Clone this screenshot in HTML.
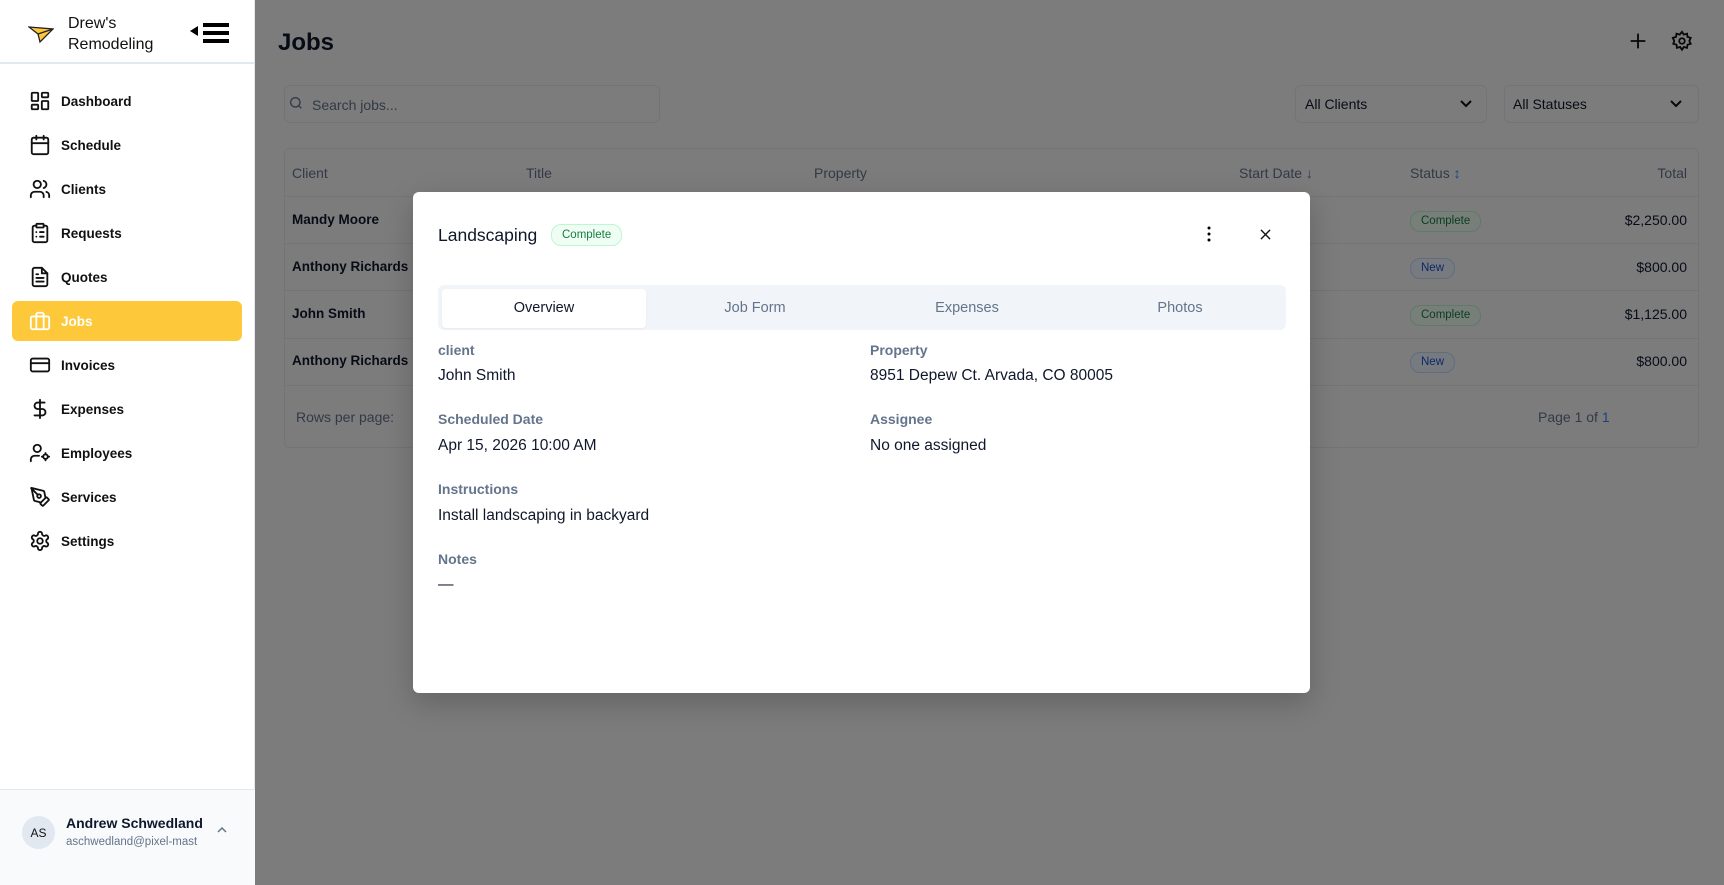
<!DOCTYPE html>
<html><head><meta charset="utf-8"><style>
*{box-sizing:border-box;margin:0;padding:0}
body{width:1724px;height:885px;overflow:hidden;font-family:"Liberation Sans",sans-serif;background:#f8f9fb;position:relative;color:#0f172a}
.sb{position:absolute;left:0;top:0;width:255px;height:885px;background:#fff;border-right:1px solid #e5e7eb}
.sbh{height:64px;border-bottom:2px solid #e2e8f0;position:relative}
.brand{position:absolute;left:68px;top:13px;font-size:16px;line-height:21px;color:#111}
.nav{position:absolute;left:0;top:79px;width:255px}
.ni{height:44px;display:flex;align-items:center;padding-left:29px;font-size:13.5px;font-weight:600;color:#111;position:relative}
.ni svg{width:22px;height:22px;margin-right:10px;fill:none;stroke:#111;stroke-width:2;stroke-linecap:round;stroke-linejoin:round}
.ni.act{background:#fdc93a;color:#fff;margin:0 13px 0 12px;padding-left:17px;border-radius:6px;height:40px;margin-top:2px;margin-bottom:2px}
.ni.act svg{stroke:#fff}
.user{position:absolute;left:0;top:789px;width:255px;height:96px;background:#f8fafc;border-top:1px solid #e2e8f0}
.av{position:absolute;left:22px;top:26px;width:33px;height:33px;border-radius:50%;background:#e2e8f0;font-size:12px;display:flex;align-items:center;justify-content:center;color:#111}
.main{position:absolute;left:255px;top:0;right:0;bottom:0}
.ov{position:absolute;left:255px;top:0;right:0;bottom:0;background:rgba(0,0,0,.5)}
.t{position:absolute;white-space:nowrap}
.modal{position:absolute;left:413px;top:192px;width:897px;height:501px;background:#fff;border-radius:6px;box-shadow:0 10px 30px rgba(0,0,0,.2)}
.lbl{position:absolute;font-size:14px;font-weight:600;color:#64748b}
.val{position:absolute;font-size:15.5px;color:#0f172a}
.badge{position:absolute;font-size:11.5px;border-radius:10px;padding:0 10px;height:21px;line-height:19px;border:1px solid}
.bc{color:#15803d;background:#f0fdf4;border-color:#bbf7d0}
.bn{color:#1d4ed8;background:#eff6ff;border-color:#bfdbfe}
</style></head><body>
<div class="sb">
 <div class="sbh">
  <svg style="position:absolute;left:28px;top:24px" width="26" height="20" viewBox="0 0 26 20"><path d="M1 3 L25 5 L12 18 L10 10 Z" fill="#fdc93a" stroke="#222" stroke-width="1.3"/><path d="M10 10 L25 5" stroke="#222" stroke-width="1.3"/></svg>
  <div class="brand">Drew's<br>Remodeling</div>
  <svg style="position:absolute;left:190px;top:22px" width="42" height="22" viewBox="0 0 42 22"><path d="M0 9 L8 4 L8 14 Z" fill="#000"/><rect x="13" y="1" width="26" height="4" fill="#000"/><rect x="13" y="9" width="26" height="4" fill="#000"/><rect x="13" y="17" width="26" height="4" fill="#000"/></svg>
 </div>
 <div class="nav">
  <div class="ni"><svg viewBox="0 0 24 24"><rect x="3" y="3" width="7" height="9" rx="1"/><rect x="14" y="3" width="7" height="5" rx="1"/><rect x="14" y="12" width="7" height="9" rx="1"/><rect x="3" y="16" width="7" height="5" rx="1"/></svg>Dashboard</div>
  <div class="ni"><svg viewBox="0 0 24 24"><rect x="3" y="4" width="18" height="18" rx="2"/><path d="M16 2v4M8 2v4M3 10h18"/></svg>Schedule</div>
  <div class="ni"><svg viewBox="0 0 24 24"><path d="M16 21v-2a4 4 0 0 0-4-4H6a4 4 0 0 0-4 4v2"/><circle cx="9" cy="7" r="4"/><path d="M22 21v-2a4 4 0 0 0-3-3.87M16 3.130a4 4 0 0 1 0 7.75"/></svg>Clients</div>
  <div class="ni"><svg viewBox="0 0 24 24"><rect x="8" y="2" width="8" height="4" rx="1"/><path d="M16 4h2a2 2 0 0 1 2 2v14a2 2 0 0 1-2 2H6a2 2 0 0 1-2-2V6a2 2 0 0 1 2-2h2M12 11h4M12 16h4M8 11h.01M8 16h.01"/></svg>Requests</div>
  <div class="ni"><svg viewBox="0 0 24 24"><path d="M14 2H6a2 2 0 0 0-2 2v16a2 2 0 0 0 2 2h12a2 2 0 0 0 2-2V8z"/><path d="M14 2v6h6M16 13H8M16 17H8M10 9H8"/></svg>Quotes</div>
  <div class="ni act"><svg viewBox="0 0 24 24"><rect x="2" y="7" width="20" height="14" rx="2"/><path d="M16 21V5a2 2 0 0 0-2-2h-4a2 2 0 0 0-2 2v16"/></svg>Jobs</div>
  <div class="ni"><svg viewBox="0 0 24 24"><rect x="2" y="5" width="20" height="14" rx="2"/><path d="M2 10h20"/></svg>Invoices</div>
  <div class="ni"><svg viewBox="0 0 24 24"><path d="M12 2v20M17 5H9.5a3.5 3.5 0 0 0 0 7h5a3.5 3.5 0 0 1 0 7H6"/></svg>Expenses</div>
  <div class="ni"><svg viewBox="0 0 24 24"><circle cx="9" cy="7" r="4"/><path d="M2 21v-2a4 4 0 0 1 4-4h5"/><circle cx="18" cy="16" r="2.5"/><path d="M18 12v1.5M18 18.5V20M14 16h1.5M20.5 16H22"/></svg>Employees</div>
  <div class="ni"><svg viewBox="0 0 24 24"><path d="M15.7 21.3a1 1 0 0 1-1.4 0l-1.6-1.6a1 1 0 0 1 0-1.4l5.6-5.6a1 1 0 0 1 1.4 0l1.6 1.6a1 1 0 0 1 0 1.4z"/><path d="m18 13-1.4-6.9a1 1 0 0 0-.8-.8L2.7 2.1 5.4 15.4a1 1 0 0 0 .8.8L13 18M2.3 2.3l7.3 7.3"/><circle cx="11" cy="11" r="2"/></svg>Services</div>
  <div class="ni"><svg viewBox="0 0 24 24"><path d="M12.2 2h-.4a2 2 0 0 0-2 2v.2a2 2 0 0 1-1 1.7l-.4.3a2 2 0 0 1-2 0l-.2-.1a2 2 0 0 0-2.7.7l-.2.4a2 2 0 0 0 .7 2.7l.2.1a2 2 0 0 1 1 1.7v.5a2 2 0 0 1-1 1.7l-.2.1a2 2 0 0 0-.7 2.7l.2.4a2 2 0 0 0 2.7.7l.2-.1a2 2 0 0 1 2 0l.4.3a2 2 0 0 1 1 1.7v.2a2 2 0 0 0 2 2h.4a2 2 0 0 0 2-2v-.2a2 2 0 0 1 1-1.7l.4-.3a2 2 0 0 1 2 0l.2.1a2 2 0 0 0 2.7-.7l.2-.4a2 2 0 0 0-.7-2.7l-.2-.1a2 2 0 0 1-1-1.7v-.5a2 2 0 0 1 1-1.7l.2-.1a2 2 0 0 0 .7-2.7l-.2-.4a2 2 0 0 0-2.7-.7l-.2.1a2 2 0 0 1-2 0l-.4-.3a2 2 0 0 1-1-1.7V4a2 2 0 0 0-2-2z"/><circle cx="12" cy="12" r="3"/></svg>Settings</div>
 </div>
 <div class="user">
  <div class="av">AS</div>
  <div class="t" style="left:66px;top:25px;font-size:14px;font-weight:600">Andrew Schwedland</div>
  <div class="t" style="left:66px;top:46px;font-size:11.5px;color:#64748b;width:136px;overflow:hidden">aschwedland@pixel-mast</div>
  <svg style="position:absolute;left:216px;top:36px" width="12" height="8" viewBox="0 0 12 8"><path d="M2 6l4-4 4 4" fill="none" stroke="#64748b" stroke-width="1.5"/></svg>
 </div>
</div>
<div class="main">
 <div class="t" style="left:23px;top:29px;font-size:24px;font-weight:700">Jobs</div>
 <svg style="position:absolute;left:1372px;top:30px" width="22" height="22" viewBox="0 0 24 24"><path d="M12 4v16M4 12h16" stroke="#111" stroke-width="2"/></svg>
 <svg style="position:absolute;left:1416px;top:30px" width="22" height="22" viewBox="0 0 24 24" fill="none" stroke="#111" stroke-width="2"><circle cx="12" cy="12" r="3"/><path d="M12 2l2 3 3.5-1 .5 3.5 3.5 1-1.5 3.5 1.5 3-3.5 1-.5 3.5-3.5-1-2 3-2-3-3.5 1-.5-3.5-3.5-1L3.5 12 2 8.5l3.5-1L6 4l3.5 1z"/></svg>
 <div style="position:absolute;left:29px;top:85px;width:376px;height:38px;border:1px solid #e2e8f0;border-radius:6px;background:#f8f9fb"></div>
 <svg style="position:absolute;left:33px;top:95px" width="16" height="16" viewBox="0 0 24 24" fill="none" stroke="#64748b" stroke-width="2"><circle cx="11" cy="11" r="7"/><path d="M20 20l-4-4"/></svg>
 <div class="t" style="left:57px;top:97px;font-size:14px;color:#64748b">Search jobs...</div>
 <div style="position:absolute;left:1040px;top:85px;width:192px;height:38px;border:1px solid #e2e8f0;border-radius:6px"></div>
 <div class="t" style="left:1050px;top:96px;font-size:14px">All Clients</div>
 <svg style="position:absolute;left:1203px;top:96px" width="16" height="16" viewBox="0 0 16 16"><path d="M3 5l5 5 5-5" fill="none" stroke="#111" stroke-width="2"/></svg>
 <div style="position:absolute;left:1249px;top:85px;width:195px;height:38px;border:1px solid #e2e8f0;border-radius:6px"></div>
 <div class="t" style="left:1258px;top:96px;font-size:14px">All Statuses</div>
 <svg style="position:absolute;left:1413px;top:96px" width="16" height="16" viewBox="0 0 16 16"><path d="M3 5l5 5 5-5" fill="none" stroke="#111" stroke-width="2"/></svg>
 <div style="position:absolute;left:29px;top:148px;width:1415px;height:300px;border:1px solid #e2e8f0;border-radius:6px"></div>
 <div style="position:absolute;left:29px;top:196px;width:1415px;border-top:1px solid #e2e8f0"></div>
 <div style="position:absolute;left:29px;top:243px;width:1415px;border-top:1px solid #e2e8f0"></div>
 <div style="position:absolute;left:29px;top:290px;width:1415px;border-top:1px solid #e2e8f0"></div>
 <div style="position:absolute;left:29px;top:338px;width:1415px;border-top:1px solid #e2e8f0"></div>
 <div style="position:absolute;left:29px;top:385px;width:1415px;border-top:1px solid #e2e8f0"></div>
 <div class="t" style="left:37px;top:165px;font-size:14px;color:#64748b">Client</div>
 <div class="t" style="left:271px;top:165px;font-size:14px;color:#64748b">Title</div>
 <div class="t" style="left:559px;top:165px;font-size:14px;color:#64748b">Property</div>
 <div class="t" style="left:984px;top:165px;font-size:14px;color:#64748b">Start Date ↓</div>
 <div class="t" style="left:1155px;top:165px;font-size:14px;color:#64748b">Status <span style="color:#3b82f6">↕</span></div>
 <div class="t" style="right:37px;top:165px;font-size:14px;color:#64748b">Total</div>
 <div class="t" style="left:37px;top:212px;font-size:13.5px;font-weight:700">Mandy Moore</div>
 <div class="t" style="left:37px;top:259px;font-size:13.5px;font-weight:700">Anthony Richards</div>
 <div class="t" style="left:37px;top:306px;font-size:13.5px;font-weight:700">John Smith</div>
 <div class="t" style="left:37px;top:353px;font-size:13.5px;font-weight:700">Anthony Richards</div>
 <div class="badge bc" style="left:1155px;top:211px">Complete</div>
 <div class="badge bn" style="left:1155px;top:258px">New</div>
 <div class="badge bc" style="left:1155px;top:305px">Complete</div>
 <div class="badge bn" style="left:1155px;top:352px">New</div>
 <div class="t" style="right:37px;top:212px;font-size:14px">$2,250.00</div>
 <div class="t" style="right:37px;top:259px;font-size:14px">$800.00</div>
 <div class="t" style="right:37px;top:306px;font-size:14px">$1,125.00</div>
 <div class="t" style="right:37px;top:353px;font-size:14px">$800.00</div>
 <div class="t" style="left:41px;top:409px;font-size:14px;color:#64748b">Rows per page:</div>
 <div class="t" style="left:1283px;top:409px;font-size:14px;color:#64748b">Page 1 of <span style="color:#3b82f6">1</span></div>
</div>
<div class="ov"></div>
<div class="modal">
 <div class="t" style="left:25px;top:33px;font-size:17.5px">Landscaping</div>
 <div class="badge bc" style="left:138px;top:32px;height:22px;line-height:20px">Complete</div>
 <svg style="position:absolute;left:790px;top:33px" width="12" height="18" viewBox="0 0 12 18"><circle cx="6" cy="3" r="1.5"/><circle cx="6" cy="9" r="1.5"/><circle cx="6" cy="15" r="1.5"/></svg>
 <svg style="position:absolute;left:847px;top:37px" width="11" height="11" viewBox="0 0 12 12"><path d="M1 1l10 10M11 1L1 11" stroke="#111" stroke-width="1.5"/></svg>
 <div style="position:absolute;left:25px;top:93px;width:848px;height:45px;background:#f1f5f9;border-radius:6px"></div>
 <div style="position:absolute;left:29px;top:97px;width:204px;height:39px;background:#fff;border-radius:4px;box-shadow:0 1px 2px rgba(0,0,0,.05)"></div>
 <div class="t" style="left:131px;top:108px;transform:translateX(-50%);font-size:14.5px">Overview</div>
 <div class="t" style="left:342px;top:108px;transform:translateX(-50%);font-size:14.5px;color:#64748b">Job Form</div>
 <div class="t" style="left:554px;top:108px;transform:translateX(-50%);font-size:14.5px;color:#64748b">Expenses</div>
 <div class="t" style="left:767px;top:108px;transform:translateX(-50%);font-size:14.5px;color:#64748b">Photos</div>
 <div class="lbl" style="left:25px;top:150px">client</div>
 <div class="val" style="left:25px;top:175px">John Smith</div>
 <div class="lbl" style="left:457px;top:150px">Property</div>
 <div class="val" style="left:457px;top:175px">8951 Depew Ct. Arvada, CO 80005</div>
 <div class="lbl" style="left:25px;top:219px">Scheduled Date</div>
 <div class="val" style="left:25px;top:245px">Apr 15, 2026 10:00 AM</div>
 <div class="lbl" style="left:457px;top:219px">Assignee</div>
 <div class="val" style="left:457px;top:245px">No one assigned</div>
 <div class="lbl" style="left:25px;top:289px">Instructions</div>
 <div class="val" style="left:25px;top:315px">Install landscaping in backyard</div>
 <div class="lbl" style="left:25px;top:359px">Notes</div>
 <div class="val" style="left:25px;top:384px">—</div>
</div>
</body></html>
